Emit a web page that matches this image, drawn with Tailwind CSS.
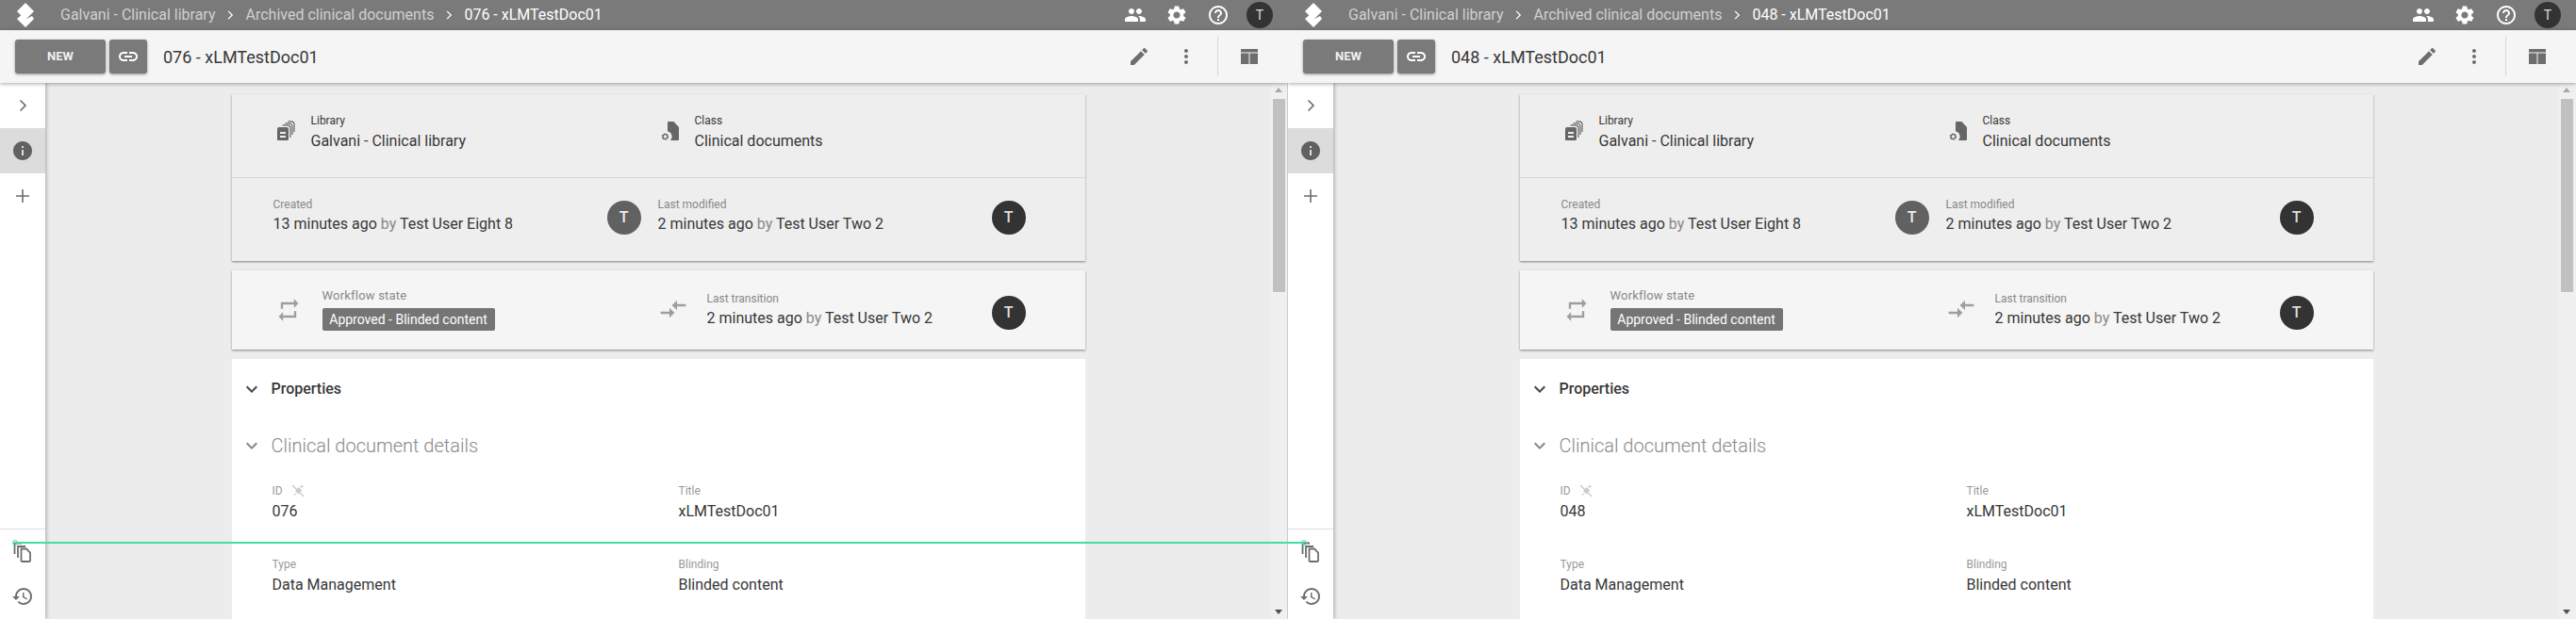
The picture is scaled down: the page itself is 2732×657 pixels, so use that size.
<!DOCTYPE html>
<html lang="en">
<head>
  <meta charset="UTF-8" />
  <title>Clinical library</title>
  <script src="https://cdn.jsdelivr.net/npm/@tailwindcss/browser@4"></script>
</head>
<body class="relative w-[2732px] h-[657px] overflow-hidden bg-[#ececec] font-['Roboto',sans-serif] text-[#383838]">

  <!-- icons -->
  <svg class="hidden">
    <symbol id="i-logo" viewBox="0 0 24 32"><path d="M12 3 21 12 12 21 3 12z" /><path d="M3 20 7.500 16 12 20.500 19 17 21 20 12 29z" /></symbol>
    <symbol id="i-people" viewBox="0 0 24 24"><path d="M16 11c1.660 0 2.990-1.340 2.990-3S17.660 5 16 5c-1.660 0-3 1.340-3 3s1.340 3 3 3zm-8 0c1.660 0 2.990-1.340 2.990-3S9.660 5 8 5C6.340 5 5 6.340 5 8s1.340 3 3 3zm0 2c-2.330 0-7 1.170-7 3.500V19h14v-2.500c0-2.330-4.670-3.500-7-3.500zm8 0c-.29 0-.62.02-.97.05 1.160.84 1.970 1.970 1.970 3.450V19h6v-2.500c0-2.330-4.670-3.500-7-3.500z" /></symbol>
    <symbol id="i-gear" viewBox="0 0 24 24"><path d="M19.140 12.940c.04-.3.06-.61.06-.94 0-.32-.02-.64-.07-.94l2.030-1.580c.18-.14.23-.41.12-.61l-1.920-3.320c-.12-.22-.37-.29-.59-.22l-2.390.96c-.5-.38-1.030-.7-1.620-.94l-.36-2.540c-.04-.24-.24-.41-.48-.41h-3.840c-.24 0-.43.17-.47.41l-.36 2.540c-.59.24-1.130.57-1.620.94l-2.390-.96c-.22-.08-.47 0-.59.22L2.740 8.870c-.12.21-.08.47.12.61l2.030 1.580c-.05.3-.09.63-.09.94s.02.64.07.94l-2.030 1.580c-.18.14-.23.41-.12.61l1.920 3.320c.12.22.37.29.59.22l2.390-.96c.5.38 1.030.7 1.620.94l.36 2.540c.05.24.24.41.48.41h3.840c.24 0 .44-.17.47-.41l.36-2.540c.59-.24 1.130-.56 1.620-.94l2.390.96c.22.08.47 0 .59-.22l1.920-3.320c.12-.22.07-.47-.12-.61l-2.010-1.580zM12 15.600c-1.980 0-3.600-1.620-3.600-3.600s1.620-3.600 3.600-3.600 3.600 1.620 3.600 3.600-1.620 3.600-3.600 3.600z" /></symbol>
    <symbol id="i-help" viewBox="0 0 24 24"><path d="M11 18h2v-2h-2v2zm1-16C6.480 2 2 6.480 2 12s4.480 10 10 10 10-4.480 10-10S17.520 2 12 2zm0 18c-4.410 0-8-3.590-8-8s3.590-8 8-8 8 3.590 8 8-3.590 8-8 8zm0-14c-2.210 0-4 1.790-4 4h2c0-1.100.9-2 2-2s2 .9 2 2c0 2-3 1.750-3 5h2c0-2.250 3-2.500 3-5 0-2.210-1.790-4-4-4z" /></symbol>
    <symbol id="i-link" viewBox="0 0 24 24"><path d="M3.900 12c0-1.710 1.390-3.100 3.100-3.100h4V7H7c-2.760 0-5 2.240-5 5s2.240 5 5 5h4v-1.900H7c-1.710 0-3.100-1.390-3.100-3.100zM8 13h8v-2H8v2zm9-6h-4v1.900h4c1.710 0 3.100 1.390 3.100 3.100s-1.390 3.100-3.100 3.100h-4V17h4c2.760 0 5-2.240 5-5s-2.240-5-5-5z" /></symbol>
    <symbol id="i-edit" viewBox="0 0 24 24"><path d="M3 17.250V21h3.750L17.810 9.940l-3.750-3.750L3 17.250zM20.710 7.040c.39-.39.39-1.020 0-1.410l-2.340-2.340c-.39-.39-1.020-.39-1.410 0l-1.830 1.830 3.750 3.750 1.830-1.830z" /></symbol>
    <symbol id="i-more" viewBox="0 0 24 24"><path d="M12 8c1.100 0 2-.9 2-2s-.9-2-2-2-2 .9-2 2 .9 2 2 2zm0 2c-1.100 0-2 .9-2 2s.9 2 2 2 2-.9 2-2-.9-2-2-2zm0 6c-1.100 0-2 .9-2 2s.9 2 2 2 2-.9 2-2-.9-2-2-2z" /></symbol>
    <symbol id="i-table" viewBox="0 0 24 24"><path d="M3 4h18v3.500H3zM3 8.500h8.500V20H3zM12.500 8.500H21V20h-8.500z" /></symbol>
    <symbol id="i-right" viewBox="0 0 24 24"><path d="M9.500 6.500 15 12l-5.500 5.500" fill="none" stroke="currentColor" stroke-width="1.700" /></symbol>
    <symbol id="i-info" viewBox="0 0 24 24"><path d="M12 2C6.480 2 2 6.480 2 12s4.480 10 10 10 10-4.480 10-10S17.520 2 12 2zm1 15h-2v-6h2v6zm0-8h-2V7h2v2z" /></symbol>
    <symbol id="i-plus" viewBox="0 0 24 24"><path d="M12 5v14M5 12h14" fill="none" stroke="currentColor" stroke-width="1.600" /></symbol>
    <symbol id="i-down" viewBox="0 0 24 24"><path d="M16.590 8.590 12 13.170 7.410 8.590 6 10l6 6 6-6z" /></symbol>
    <symbol id="i-repeat" viewBox="0 0 24 24"><path d="M7 7h10v3l4-4-4-4v3H5v6h2V7zm10 10H7v-3l-4 4 4 4v-3h12v-6h-2v4z" /></symbol>
    <symbol id="i-compare" viewBox="0 0 24 24"><path d="M9.010 14H2v2h7.010v3L13 15l-3.990-4v3zm5.980-1v-3H22V8h-7.010V5L11 9l3.990 4z" /></symbol>
    <symbol id="i-history" viewBox="0 0 24 24"><path d="M13 3c-4.970 0-9 4.030-9 9H1l3.890 3.890.07.14L9 12H6c0-3.870 3.130-7 7-7s7 3.130 7 7-3.130 7-7 7c-1.930 0-3.680-.79-4.940-2.060l-1.420 1.420C8.270 19.990 10.510 21 13 21c4.970 0 9-4.030 9-9s-4.030-9-9-9zm-1 5v5l4.280 2.540.72-1.210-3.500-2.080V8H12z" /></symbol>
    <symbol id="i-copies" viewBox="0 0 24 24"><path d="M10.500 8.500H16l4 4V21a1 1 0 0 1-1 1h-7.500a1 1 0 0 1-1-1z M7 18V6h8 M3.500 14V2.500H11" fill="none" stroke="currentColor" stroke-width="1.800" /></symbol>
    <symbol id="i-library" viewBox="0 0 24 24"><path d="M4 8h8a2 2 0 0 1 2 2v11a1 1 0 0 1-1 1H3a1 1 0 0 1-1-1V10a2 2 0 0 1 2-2zM5 13v2h6v-2zM5 17v2h6v-2z" fill-rule="evenodd" /><path d="M7.500 5.800h5a3.500 3.500 0 0 1 3.500 3.500V19M10.500 3.800h4a3.500 3.500 0 0 1 3.500 3.500V16M13.500 1.800h3a3.500 3.500 0 0 1 3.500 3.500V13" fill="none" stroke="currentColor" stroke-width="1.200" /></symbol>
    <symbol id="i-class" viewBox="0 0 24 24"><path d="M10 2h5.500L21 8v13a1 1 0 0 1-1 1h-8.200a5.500 5.500 0 0 0-2.800-9.500V3a1 1 0 0 1 1-1z" /><circle cx="6.500" cy="18" r="2.600" fill="none" stroke="currentColor" stroke-width="2" stroke-dasharray="1.800 .8" /><circle cx="6.500" cy="18" r="2.700" fill="none" stroke="currentColor" stroke-width=".8" /></symbol>
    <symbol id="i-pinoff" viewBox="0 0 24 24"><path d="M3 3 21 21" fill="none" stroke="currentColor" stroke-width="2.200" /><path d="M13 6 18.500 11.500 12 17 7.500 12z M8 15.500 3 21.500 9.500 17z M18 2l1 2.200 2.200 1-2.200 1-1 2.200-1-2.200-2.200-1 2.200-1z" /></symbol>
  </svg>

  <div class="flex w-full h-full">

    <!-- left pane -->
    <section class="flex flex-col w-[1366px] h-full shrink-0 overflow-hidden">
      <header class="flex items-center h-8 shrink-0 bg-[#7a7a7a] text-white">
        <svg class="w-6 h-8 ml-[15px] fill-white"><use href="#i-logo" /></svg>
        <nav class="flex items-center ml-[25px] text-[16px] leading-8">
          <span class="text-[#d0d0d0]">Galvani - Clinical library</span>
          <svg class="w-[18px] h-[18px] mx-[7px] text-white"><use href="#i-right" /></svg>
          <span class="text-[#d0d0d0]">Archived clinical documents</span>
          <svg class="w-[18px] h-[18px] mx-[7px] text-white"><use href="#i-right" /></svg>
          <span>076 - xLMTestDoc01</span>
        </nav>
        <div class="flex items-center ml-auto">
          <svg class="w-6 h-6 fill-white"><use href="#i-people" /></svg>
          <svg class="w-6 h-6 ml-5 fill-white"><use href="#i-gear" /></svg>
          <svg class="w-6 h-6 ml-5 fill-white"><use href="#i-help" /></svg>
          <span class="flex items-center justify-center w-7 h-7 ml-[18px] mr-4 rounded-full bg-[#333] text-sm text-[#ddd]">T</span>
        </div>
      </header>

      <div class="relative z-10 flex items-center h-14 shrink-0 bg-[#f5f5f5] shadow-[0_1px_4px_rgba(0,0,0,0.35)]">
        <button class="w-24 h-9 ml-4 rounded-[3px] bg-[#7a7a7a] text-[13px] font-bold text-[#f0f0f0] shadow-[0_1px_3px_rgba(0,0,0,0.4)]">NEW</button>
        <button class="flex items-center justify-center w-10 h-9 ml-1 rounded-[3px] bg-[#7a7a7a] shadow-[0_1px_3px_rgba(0,0,0,0.4)]">
          <svg class="w-6 h-6 fill-white"><use href="#i-link" /></svg>
        </button>
        <h1 class="ml-[17px] text-[18px]">076 - xLMTestDoc01</h1>
        <div class="flex items-center ml-auto">
          <svg class="w-6 h-6 fill-[#6e6e6e]"><use href="#i-edit" /></svg>
          <svg class="w-6 h-6 ml-[26px] fill-[#6e6e6e]"><use href="#i-more" /></svg>
          <span class="w-px h-[42px] ml-[21px] bg-[#d8d8d8]"></span>
          <svg class="w-6 h-6 ml-[21px] mr-[29px] fill-[#6e6e6e]"><use href="#i-table" /></svg>
        </div>
      </div>

      <div class="flex flex-1 min-h-0">
        <aside class="flex flex-col w-12 shrink-0 bg-white text-[#6e6e6e] shadow-[1px_0_4px_rgba(0,0,0,0.3)]">
          <div class="flex items-center justify-center h-12"><svg class="w-6 h-6"><use href="#i-right" /></svg></div>
          <div class="flex items-center justify-center h-12 bg-[#dcdcdc]"><svg class="w-6 h-6 fill-[#616161]"><use href="#i-info" /></svg></div>
          <div class="flex items-center justify-center h-12"><svg class="w-6 h-6"><use href="#i-plus" /></svg></div>
          <div class="mt-auto flex flex-col h-[96px] border-t border-[#ddd]">
            <div class="flex items-center justify-center h-12"><svg class="w-6 h-6"><use href="#i-copies" /></svg></div>
            <div class="flex items-center justify-center h-12"><svg class="w-6 h-6 fill-[#6e6e6e]"><use href="#i-history" /></svg></div>
          </div>
        </aside>

        <main class="flex-1 min-w-0 overflow-hidden">
          <div class="w-[905px] mx-auto pt-3">
            <div class="bg-[#eee] shadow-[0_1px_2px_rgba(0,0,0,0.45)]">
              <div class="grid grid-cols-[453px_1fr] h-[89px] pt-5 border-b border-[#d6d6d6]">
                <div class="flex pl-[46px] gap-[14px]">
                  <svg class="w-6 h-6 mt-[7px] fill-[#666] text-[#666]"><use href="#i-library" /></svg>
                  <div><p class="h-4 text-xs leading-4">Library</p><p class="text-base leading-[28px]">Galvani - Clinical library</p></div>
                </div>
                <div class="flex gap-[14px]">
                  <svg class="w-6 h-6 mt-[7px] fill-[#666] text-[#666]"><use href="#i-class" /></svg>
                  <div><p class="h-4 text-xs leading-4">Class</p><p class="text-base leading-[28px]">Clinical documents</p></div>
                </div>
              </div>
              <div class="grid grid-cols-[452px_408px] h-[88px] pt-5">
                <div class="flex pl-[44px] pr-[18px]">
                  <div><p class="h-4 text-xs leading-4 text-[#888]">Created</p><p class="text-base leading-[26px]">13 minutes ago <span class="text-[#888]">by</span> Test User Eight 8</p></div>
                  <span class="flex items-center justify-center w-9 h-9 mt-1 ml-auto rounded-full bg-[#616161] text-base font-medium text-[#eee]">T</span>
                </div>
                <div class="flex pr-[18px]">
                  <div><p class="h-4 text-xs leading-4 text-[#888]">Last modified</p><p class="text-base leading-[26px]">2 minutes ago <span class="text-[#888]">by</span> Test User Two 2</p></div>
                  <span class="flex items-center justify-center w-9 h-9 mt-1 ml-auto rounded-full bg-[#333] text-base font-medium text-[#ddd]">T</span>
                </div>
              </div>
            </div>

            <div class="grid grid-cols-[456px_404px] h-[84px] mt-2.5 bg-[#f5f5f5] shadow-[0_1px_2px_rgba(0,0,0,0.45)]">
              <div class="flex pl-[46px] pt-[19px] gap-[22px]">
                <svg class="w-7 h-7 mt-[9px] fill-[#9e9e9e]"><use href="#i-repeat" /></svg>
                <div>
                  <p class="h-4 text-[13px] leading-4 tracking-[0.2px] text-[#888]">Workflow state</p>
                  <p class="w-[183px] h-6 mt-[5px] rounded-[2px] bg-[#757575] text-center text-sm leading-6 text-white">Approved - Blinded content</p>
                </div>
              </div>
              <div class="flex -ml-1 pr-[18px] pt-[22px] gap-5">
                <svg class="w-8 h-8 mt-[3px] fill-[#9e9e9e]"><use href="#i-compare" /></svg>
                <div><p class="h-4 text-xs leading-4 text-[#888]">Last transition</p><p class="text-base leading-[26px]">2 minutes ago <span class="text-[#888]">by</span> Test User Two 2</p></div>
                <span class="flex items-center justify-center w-9 h-9 mt-[5px] ml-auto rounded-full bg-[#333] text-base font-medium text-[#ddd]">T</span>
              </div>
            </div>

            <div class="h-[400px] mt-2.5 bg-white pt-5">
              <div class="flex items-center h-6 pl-[9px] gap-[9px]">
                <svg class="w-6 h-6 fill-[#444]"><use href="#i-down" /></svg>
                <h2 class="text-base font-medium">Properties</h2>
              </div>
              <div class="flex items-center h-7 mt-[34px] pl-[9px] gap-[9px]">
                <svg class="w-6 h-6 fill-[#888]"><use href="#i-down" /></svg>
                <h3 class="text-[20px] font-light text-[#888]">Clinical document details</h3>
              </div>
              <dl class="grid grid-cols-[431px_1fr] gap-y-[35px] mt-[26px] pl-[43px]">
                <div><dt class="flex items-center h-4 text-xs leading-4 text-[#999]">ID<svg class="w-4 h-4 ml-2 fill-[#ccc] text-[#ccc]"><use href="#i-pinoff" /></svg></dt><dd class="text-base leading-[27px]">076</dd></div>
                <div><dt class="h-4 text-xs leading-4 text-[#999]">Title</dt><dd class="text-base leading-[27px]">xLMTestDoc01</dd></div>
                <div><dt class="h-4 text-xs leading-4 text-[#999]">Type</dt><dd class="text-base leading-[27px]">Data Management</dd></div>
                <div><dt class="h-4 text-xs leading-4 text-[#999]">Blinding</dt><dd class="text-base leading-[27px]">Blinded content</dd></div>
              </dl>
            </div>
          </div>
        </main>

        <div class="relative w-[18px] shrink-0 bg-[#f0f0f0] border-r border-[#ccc]">
          <span class="block w-[13px] h-[205px] mt-[17px] ml-0.5 bg-[#c1c1c1]"></span>
          <span class="absolute top-[5px] left-[4px] border-x-[4px] border-b-[5px] border-x-transparent border-b-[#a8a8a8]"></span>
          <span class="absolute bottom-[5px] left-[4px] border-x-[4px] border-t-[5px] border-x-transparent border-t-[#505050]"></span>
        </div>
      </div>
    </section>

    <!-- right pane -->
    <section class="flex flex-col w-[1366px] h-full shrink-0 overflow-hidden">
      <header class="flex items-center h-8 shrink-0 bg-[#7a7a7a] text-white">
        <svg class="w-6 h-8 ml-[15px] fill-white"><use href="#i-logo" /></svg>
        <nav class="flex items-center ml-[25px] text-[16px] leading-8">
          <span class="text-[#d0d0d0]">Galvani - Clinical library</span>
          <svg class="w-[18px] h-[18px] mx-[7px] text-white"><use href="#i-right" /></svg>
          <span class="text-[#d0d0d0]">Archived clinical documents</span>
          <svg class="w-[18px] h-[18px] mx-[7px] text-white"><use href="#i-right" /></svg>
          <span>048 - xLMTestDoc01</span>
        </nav>
        <div class="flex items-center ml-auto">
          <svg class="w-6 h-6 fill-white"><use href="#i-people" /></svg>
          <svg class="w-6 h-6 ml-5 fill-white"><use href="#i-gear" /></svg>
          <svg class="w-6 h-6 ml-5 fill-white"><use href="#i-help" /></svg>
          <span class="flex items-center justify-center w-7 h-7 ml-[18px] mr-4 rounded-full bg-[#333] text-sm text-[#ddd]">T</span>
        </div>
      </header>

      <div class="relative z-10 flex items-center h-14 shrink-0 bg-[#f5f5f5] shadow-[0_1px_4px_rgba(0,0,0,0.35)]">
        <button class="w-24 h-9 ml-4 rounded-[3px] bg-[#7a7a7a] text-[13px] font-bold text-[#f0f0f0] shadow-[0_1px_3px_rgba(0,0,0,0.4)]">NEW</button>
        <button class="flex items-center justify-center w-10 h-9 ml-1 rounded-[3px] bg-[#7a7a7a] shadow-[0_1px_3px_rgba(0,0,0,0.4)]">
          <svg class="w-6 h-6 fill-white"><use href="#i-link" /></svg>
        </button>
        <h1 class="ml-[17px] text-[18px]">048 - xLMTestDoc01</h1>
        <div class="flex items-center ml-auto">
          <svg class="w-6 h-6 fill-[#6e6e6e]"><use href="#i-edit" /></svg>
          <svg class="w-6 h-6 ml-[26px] fill-[#6e6e6e]"><use href="#i-more" /></svg>
          <span class="w-px h-[42px] ml-[21px] bg-[#d8d8d8]"></span>
          <svg class="w-6 h-6 ml-[21px] mr-[29px] fill-[#6e6e6e]"><use href="#i-table" /></svg>
        </div>
      </div>

      <div class="flex flex-1 min-h-0">
        <aside class="flex flex-col w-12 shrink-0 bg-white text-[#6e6e6e] shadow-[1px_0_4px_rgba(0,0,0,0.3)]">
          <div class="flex items-center justify-center h-12"><svg class="w-6 h-6"><use href="#i-right" /></svg></div>
          <div class="flex items-center justify-center h-12 bg-[#dcdcdc]"><svg class="w-6 h-6 fill-[#616161]"><use href="#i-info" /></svg></div>
          <div class="flex items-center justify-center h-12"><svg class="w-6 h-6"><use href="#i-plus" /></svg></div>
          <div class="mt-auto flex flex-col h-[96px] border-t border-[#ddd]">
            <div class="flex items-center justify-center h-12"><svg class="w-6 h-6"><use href="#i-copies" /></svg></div>
            <div class="flex items-center justify-center h-12"><svg class="w-6 h-6 fill-[#6e6e6e]"><use href="#i-history" /></svg></div>
          </div>
        </aside>

        <main class="flex-1 min-w-0 overflow-hidden">
          <div class="w-[905px] mx-auto pt-3">
            <div class="bg-[#eee] shadow-[0_1px_2px_rgba(0,0,0,0.45)]">
              <div class="grid grid-cols-[453px_1fr] h-[89px] pt-5 border-b border-[#d6d6d6]">
                <div class="flex pl-[46px] gap-[14px]">
                  <svg class="w-6 h-6 mt-[7px] fill-[#666] text-[#666]"><use href="#i-library" /></svg>
                  <div><p class="h-4 text-xs leading-4">Library</p><p class="text-base leading-[28px]">Galvani - Clinical library</p></div>
                </div>
                <div class="flex gap-[14px]">
                  <svg class="w-6 h-6 mt-[7px] fill-[#666] text-[#666]"><use href="#i-class" /></svg>
                  <div><p class="h-4 text-xs leading-4">Class</p><p class="text-base leading-[28px]">Clinical documents</p></div>
                </div>
              </div>
              <div class="grid grid-cols-[452px_408px] h-[88px] pt-5">
                <div class="flex pl-[44px] pr-[18px]">
                  <div><p class="h-4 text-xs leading-4 text-[#888]">Created</p><p class="text-base leading-[26px]">13 minutes ago <span class="text-[#888]">by</span> Test User Eight 8</p></div>
                  <span class="flex items-center justify-center w-9 h-9 mt-1 ml-auto rounded-full bg-[#616161] text-base font-medium text-[#eee]">T</span>
                </div>
                <div class="flex pr-[18px]">
                  <div><p class="h-4 text-xs leading-4 text-[#888]">Last modified</p><p class="text-base leading-[26px]">2 minutes ago <span class="text-[#888]">by</span> Test User Two 2</p></div>
                  <span class="flex items-center justify-center w-9 h-9 mt-1 ml-auto rounded-full bg-[#333] text-base font-medium text-[#ddd]">T</span>
                </div>
              </div>
            </div>

            <div class="grid grid-cols-[456px_404px] h-[84px] mt-2.5 bg-[#f5f5f5] shadow-[0_1px_2px_rgba(0,0,0,0.45)]">
              <div class="flex pl-[46px] pt-[19px] gap-[22px]">
                <svg class="w-7 h-7 mt-[9px] fill-[#9e9e9e]"><use href="#i-repeat" /></svg>
                <div>
                  <p class="h-4 text-[13px] leading-4 tracking-[0.2px] text-[#888]">Workflow state</p>
                  <p class="w-[183px] h-6 mt-[5px] rounded-[2px] bg-[#757575] text-center text-sm leading-6 text-white">Approved - Blinded content</p>
                </div>
              </div>
              <div class="flex -ml-1 pr-[18px] pt-[22px] gap-5">
                <svg class="w-8 h-8 mt-[3px] fill-[#9e9e9e]"><use href="#i-compare" /></svg>
                <div><p class="h-4 text-xs leading-4 text-[#888]">Last transition</p><p class="text-base leading-[26px]">2 minutes ago <span class="text-[#888]">by</span> Test User Two 2</p></div>
                <span class="flex items-center justify-center w-9 h-9 mt-[5px] ml-auto rounded-full bg-[#333] text-base font-medium text-[#ddd]">T</span>
              </div>
            </div>

            <div class="h-[400px] mt-2.5 bg-white pt-5">
              <div class="flex items-center h-6 pl-[9px] gap-[9px]">
                <svg class="w-6 h-6 fill-[#444]"><use href="#i-down" /></svg>
                <h2 class="text-base font-medium">Properties</h2>
              </div>
              <div class="flex items-center h-7 mt-[34px] pl-[9px] gap-[9px]">
                <svg class="w-6 h-6 fill-[#888]"><use href="#i-down" /></svg>
                <h3 class="text-[20px] font-light text-[#888]">Clinical document details</h3>
              </div>
              <dl class="grid grid-cols-[431px_1fr] gap-y-[35px] mt-[26px] pl-[43px]">
                <div><dt class="flex items-center h-4 text-xs leading-4 text-[#999]">ID<svg class="w-4 h-4 ml-2 fill-[#ccc] text-[#ccc]"><use href="#i-pinoff" /></svg></dt><dd class="text-base leading-[27px]">048</dd></div>
                <div><dt class="h-4 text-xs leading-4 text-[#999]">Title</dt><dd class="text-base leading-[27px]">xLMTestDoc01</dd></div>
                <div><dt class="h-4 text-xs leading-4 text-[#999]">Type</dt><dd class="text-base leading-[27px]">Data Management</dd></div>
                <div><dt class="h-4 text-xs leading-4 text-[#999]">Blinding</dt><dd class="text-base leading-[27px]">Blinded content</dd></div>
              </dl>
            </div>
          </div>
        </main>

        <div class="relative w-[18px] shrink-0 bg-[#f0f0f0]">
          <span class="block w-[13px] h-[205px] mt-[17px] ml-0.5 bg-[#c1c1c1]"></span>
          <span class="absolute top-[5px] left-[4px] border-x-[4px] border-b-[5px] border-x-transparent border-b-[#a8a8a8]"></span>
          <span class="absolute bottom-[5px] left-[4px] border-x-[4px] border-t-[5px] border-x-transparent border-t-[#505050]"></span>
        </div>
      </div>
    </section>
  </div>

  <!-- green drop guide lying over both panes -->
  <div class="absolute z-20 left-4 top-[575px] w-[1367px] h-0.5 bg-[#45dd9f]">
    <span class="absolute -left-[3px] -top-[2px] w-1.5 h-1.5 rounded-full border border-[#45dd9f]"></span>
    <span class="absolute -right-[3px] -top-[2px] w-1.5 h-1.5 rounded-full border border-[#45dd9f]"></span>
  </div>
</body>
</html>
